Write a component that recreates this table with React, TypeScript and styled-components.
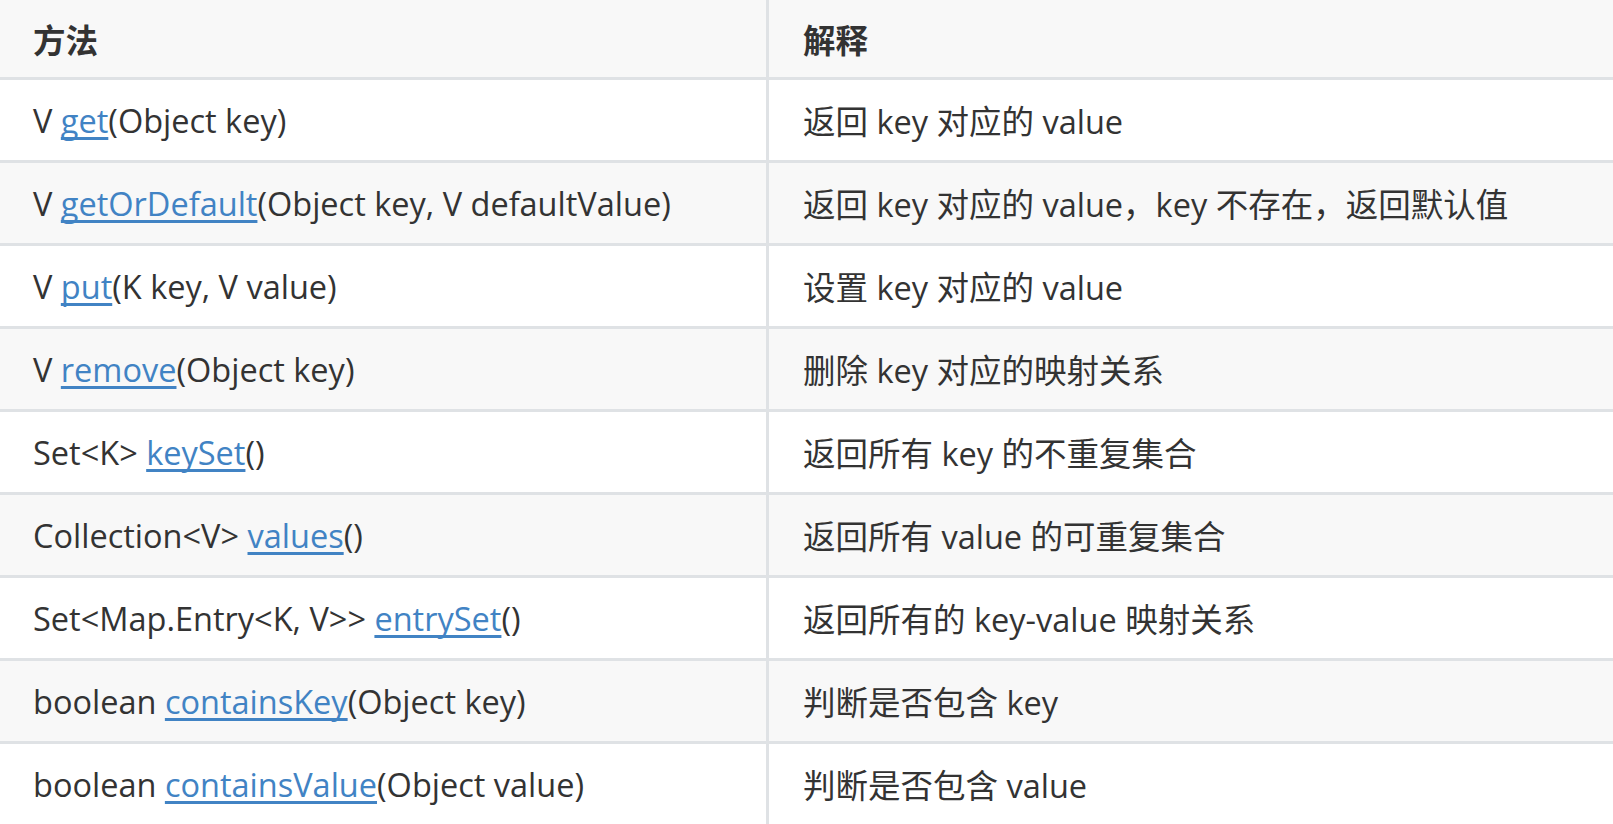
import React from "react";
import styled, { createGlobalStyle } from "styled-components";

const GlobalStyle = createGlobalStyle`
    html, body {
        margin: 0;
        padding: 0;
        background: #fff;
    }
    body {
        font-family: "Open Sans", "Noto Sans CJK SC", sans-serif;
        color: #333;
        overflow: hidden;
    }
`;

type Row = {
    prefix: string;
    link: string;
    suffix: string;
    desc: string;
};

const rows: Row[] = [
    { prefix: "V ", link: "get", suffix: "(Object key)", desc: "返回 key 对应的 value" },
    { prefix: "V ", link: "getOrDefault", suffix: "(Object key, V defaultValue)", desc: "返回 key 对应的 value，key 不存在，返回默认值" },
    { prefix: "V ", link: "put", suffix: "(K key, V value)", desc: "设置 key 对应的 value" },
    { prefix: "V ", link: "remove", suffix: "(Object key)", desc: "删除 key 对应的映射关系" },
    { prefix: "Set<K> ", link: "keySet", suffix: "()", desc: "返回所有 key 的不重复集合" },
    { prefix: "Collection<V> ", link: "values", suffix: "()", desc: "返回所有 value 的可重复集合" },
    { prefix: "Set<Map.Entry<K, V>> ", link: "entrySet", suffix: "()", desc: "返回所有的 key-value 映射关系" },
    { prefix: "boolean ", link: "containsKey", suffix: "(Object key)", desc: "判断是否包含 key" },
    { prefix: "boolean ", link: "containsValue", suffix: "(Object value)", desc: "判断是否包含 value" },
];

const Table = styled.div`
    display: grid;
    grid-template-columns: 766px 1fr;
    width: 1613px;
`;

const Line = styled.div<{ $shaded: boolean; $header?: boolean }>`
    display: contents;
    & > div {
        background: ${(p) => (p.$shaded ? "#f8f8f8" : "#fff")};
        height: ${(p) => (p.$header ? "77px" : "80px")};
        border-top: ${(p) => (p.$header ? "none" : "3px solid #dfe2e5")};
        font-weight: ${(p) => (p.$header ? 700 : 400)};
    }
`;

const Cell = styled.div<{ $right?: boolean }>`
    display: flex;
    align-items: center;
    box-sizing: content-box;
    padding-left: ${(p) => (p.$right ? "34px" : "33px")};
    border-left: ${(p) => (p.$right ? "3px solid #dfe2e5" : "none")};
    font-size: 32.5px;
    white-space: pre;
`;

const Link = styled.a`
    color: #4183c4;
    text-decoration: underline;
    text-decoration-thickness: 3px;
    text-underline-offset: 4px;
    text-decoration-skip-ink: none;
    text-decoration-color: #4183c4;
`;

export default function App() {
    return (
        <>
            <GlobalStyle />
            <Table>
                <Line $shaded={true} $header={true}>
                    <Cell><span>方法</span></Cell>
                    <Cell $right><span>解释</span></Cell>
                </Line>
                {rows.map((r, i) => (
                    <Line key={r.link} $shaded={i % 2 === 1}>
                        <Cell>
                            <span>
                                {r.prefix}
                                <Link href="#">{r.link}</Link>
                                {r.suffix}
                            </span>
                        </Cell>
                        <Cell $right><span>{r.desc}</span></Cell>
                    </Line>
                ))}
            </Table>
        </>
    );
}
